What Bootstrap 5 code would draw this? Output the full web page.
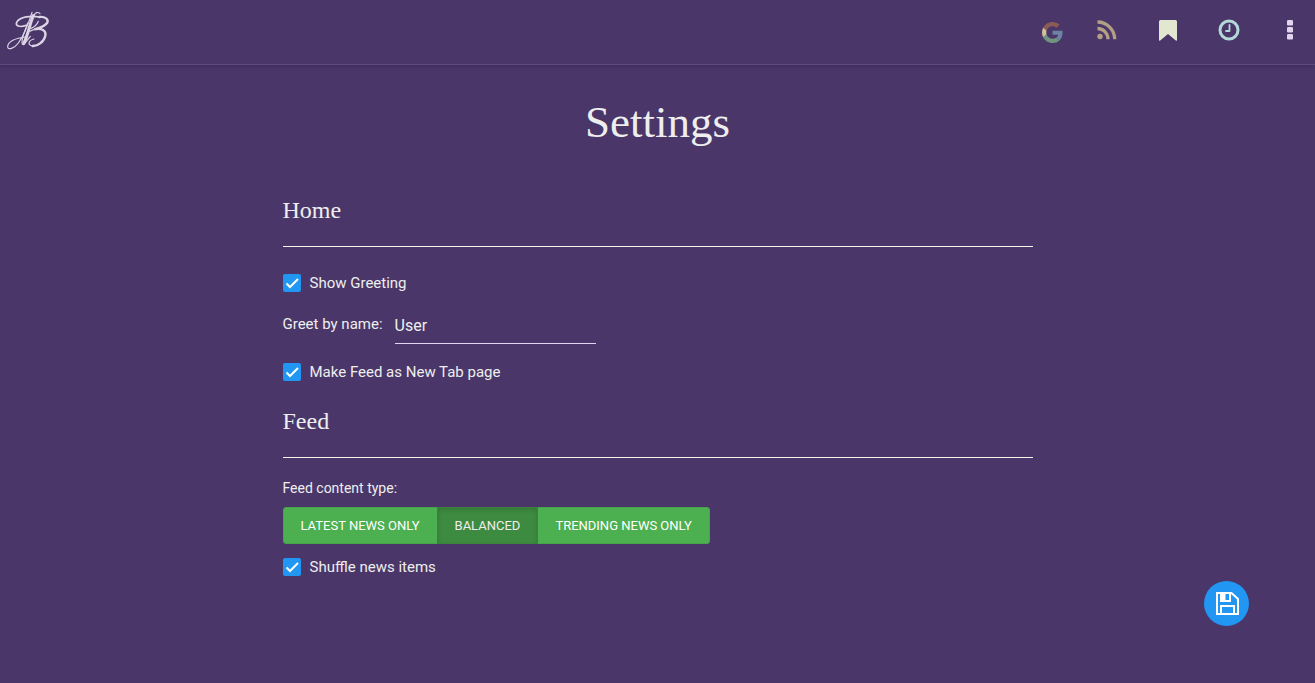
<!DOCTYPE html>
<html lang="en">
<head>
<meta charset="utf-8">
<meta name="viewport" content="width=device-width, initial-scale=1">
<title>Settings</title>
<link href="https://cdn.jsdelivr.net/npm/bootstrap@5.3.0/dist/css/bootstrap.min.css" rel="stylesheet">
<style>
  body { background: #4a3669; color: #eee; font: 15px/24px Roboto, sans-serif; }
  h1, h2 { font-family: "Liberation Serif", serif; font-weight: 400; }
  h1 { font-size: 45px; line-height: 54px; margin: 30px 0 47px; }
  h2 { font-size: 24px; line-height: 28px; margin: 0; }
  .topbar { height: 65px; padding: 0 13px 4px 7px; border-bottom: 1px solid #5d4a82; box-shadow: 0 1px 4px rgba(0,0,0,.2); }
  .topbar svg { display: block; }
  .icon-nav { gap: 37px; }
  .icon-link-box { width: 24px; height: 24px; display: flex; align-items: center; justify-content: center; padding: 0; border: 0; background: none; }
  .google-link { margin: 4px 31px 0 0; }
  .page { max-width: 750px; }
  .rule { margin: 22px 0 24px; border-top: 1px solid #f1f8e9; opacity: 1; }
  .tick { min-height: 24px; margin: 0; padding: 0; gap: 9px; }
  .tick .form-check-input { float: none; width: 18px; height: 18px; margin: 0; border: 0; border-radius: 2px; background-color: #2196f3;
    background-size: 18px 18px;
    background-image: url("data:image/svg+xml,%3Csvg xmlns='http://www.w3.org/2000/svg' viewBox='0 0 18 18'%3E%3Cpath d='M3.5 9.5 7 13l8-8' fill='none' stroke='%23fff' stroke-width='2'/%3E%3C/svg%3E"); }
  .greet { margin: 12px 0 16px; gap: 12px; }
  .greet input { width: 201px; height: 37px; padding: 0; border: 0; border-bottom: 1px solid #e1d5f0; border-radius: 0; background: none; color: #eee; font-size: 16px; }
  .greet input:focus { background: none; color: #fff; box-shadow: none; }
  .feed-group { margin-top: 23px; }
  .feed-label { font-size: 14px; line-height: 20px; margin-bottom: 9px; }
  .feed-type { margin-bottom: 11px; }
  .feed-type .btn { --bs-btn-color: #fff; --bs-btn-bg: #4caf50; --bs-btn-border-color: #47a44b; --bs-btn-hover-color: #fff; --bs-btn-hover-bg: #439a46; --bs-btn-active-bg: #3d8b40; --bs-btn-active-border-color: #39833c;
    height: 37px; padding: 0 17px; border-radius: 3px; font-size: 13px; line-height: 20px; text-transform: uppercase; }
  .feed-type .btn-check:checked + .btn { box-shadow: inset 0 2px 4px rgba(0,0,0,.15); }
  .save { right: 66px; bottom: 57px; width: 45px; height: 45px; background: #2196f3; }
</style>
</head>
<body>
<header class="topbar d-flex align-items-center">
  <a href="#" class="me-auto" aria-label="Home">
    <svg width="44" height="40" viewBox="22 33 132 120" fill="none" stroke="#ddd5e6" stroke-linecap="round">
      <path stroke-width="3.500" d="M97 40C87 72 74 108 56 132C44 149 24 154 24 143C24 127 48 117 78 114"/>
      <path stroke-width="9" d="M101 50C90 75 86 106 72 134"/>
      <path stroke-width="3.500" d="M102 50C107 41 114 37 121 44M84 72C77 95 62 122 68 136M72 136C80 130 85 120 92 112"/>
      <path stroke-width="5" d="M80 79C58 87 47 80 51 70C60 53 95 49 119 54"/>
      <path stroke-width="7" d="M119 54C137 52 147 62 143 71C137 82 119 87 104 91C128 86 140 96 137 110C133 128 115 142 99 141"/>
      <path stroke-width="3.500" d="M104 91C99 92 94 95 91 97M99 141C83 140 85 124 103 120M94 88C105 85 112 77 116 67"/>
    </svg>
  </a>
  <a href="#" class="icon-link-box google-link" aria-label="Google">
    <svg width="21" height="21" viewBox="0 0 48 48">
      <path fill="#8b5c56" d="M24 9.500c3.540 0 6.710 1.220 9.210 3.600l6.850-6.850C35.900 2.380 30.470 0 24 0 14.620 0 6.510 5.380 2.560 13.220l7.980 6.190C12.430 13.720 17.740 9.500 24 9.500z"/>
      <path fill="#6c83a6" d="M46.980 24.550c0-1.570-.15-3.090-.38-4.550H24v9.020h12.940c-.58 2.960-2.260 5.480-4.780 7.180l7.730 6c4.510-4.180 7.090-10.360 7.090-17.650z"/>
      <path fill="#d2c096" d="M10.530 28.590c-.48-1.450-.76-2.990-.76-4.590s.27-3.140.76-4.590l-7.980-6.190C.92 16.460 0 20.120 0 24s.92 7.540 2.560 10.780l7.970-6.190z"/>
      <path fill="#70957c" d="M24 48c6.480 0 11.930-2.130 15.890-5.810l-7.730-6c-2.150 1.450-4.920 2.300-8.160 2.300-6.260 0-11.570-4.220-13.470-9.910l-7.980 6.190C6.510 42.620 14.620 48 24 48z"/>
    </svg>
  </a>
  <nav class="icon-nav d-flex align-items-center" aria-label="Main">
    <a href="#" class="icon-link-box" aria-label="Feed">
      <svg width="20" height="20" viewBox="0 0 20 20" fill="none" stroke="#b39f84" stroke-width="3.300">
        <circle cx="3" cy="16.500" r="2.700" fill="#b39f84" stroke="none"/>
        <path d="M.5 8.500A10.700 10.700 0 0 1 11 19.200M.5 2A17.300 17.300 0 0 1 17.700 19.200"/>
      </svg>
    </a>
    <a href="#" class="icon-link-box" aria-label="Bookmarks">
      <svg width="18" height="21" viewBox="0 0 18 21" fill="#e1e8cf"><path d="M1.500 0h15Q18 0 18 1.500v18.200q0 1.600-1.200.8L9 14 1.200 20.500Q0 21.300 0 19.700V1.500Q0 0 1.500 0z"/></svg>
    </a>
    <a href="#" class="icon-link-box" aria-label="History">
      <svg width="22" height="22" viewBox="0 0 22 22" fill="none" stroke="#b2d8d8">
        <circle cx="11" cy="11" r="9" stroke-width="3"/>
        <path stroke-width="1.800" stroke-linecap="round" stroke-linejoin="round" d="M11.500 6v6H8"/>
      </svg>
    </a>
    <button type="button" class="icon-link-box" aria-label="More">
      <svg width="6" height="20" viewBox="0 0 6 20" fill="#e1d5ee"><rect width="6" height="5.500" rx="1.200"/><rect y="7" width="6" height="5.500" rx="1.200"/><rect y="14" width="6" height="5.500" rx="1.200"/></svg>
    </button>
  </nav>
</header>

<main class="page container-fluid px-0">
  <h1 class="text-center">Settings</h1>
  <form>
    <section>
      <h2>Home</h2>
      <hr class="rule">
      <div class="tick form-check d-flex align-items-center">
        <input class="form-check-input" type="checkbox" id="greeting" checked>
        <label for="greeting">Show Greeting</label>
      </div>
      <div class="greet d-flex align-items-center">
        <label class="pb-1" for="username">Greet by name:</label>
        <input class="form-control" type="text" id="username" value="User">
      </div>
      <div class="tick form-check d-flex align-items-center">
        <input class="form-check-input" type="checkbox" id="newtab" checked>
        <label for="newtab">Make Feed as New Tab page</label>
      </div>
    </section>
    <section class="feed-group">
      <h2>Feed</h2>
      <hr class="rule mb-3">
      <div class="feed-label pt-1" id="feed-type-label">Feed content type:</div>
      <div class="feed-type btn-group d-inline-flex" role="group" aria-labelledby="feed-type-label">
        <input type="radio" class="btn-check" name="feedtype" id="latest">
        <label class="btn d-flex align-items-center" for="latest">Latest news only</label>
        <input type="radio" class="btn-check" name="feedtype" id="balanced" checked>
        <label class="btn d-flex align-items-center" for="balanced">Balanced</label>
        <input type="radio" class="btn-check" name="feedtype" id="trending">
        <label class="btn d-flex align-items-center" for="trending">Trending news only</label>
      </div>
      <div class="tick form-check d-flex align-items-center">
        <input class="form-check-input" type="checkbox" id="shuffle" checked>
        <label for="shuffle">Shuffle news items</label>
      </div>
    </section>
  </form>
</main>

<button type="button" class="save btn rounded-circle border-0 p-0 position-fixed d-flex align-items-center justify-content-center" aria-label="Save">
  <svg width="24" height="24" viewBox="0 0 24 24" fill="none" stroke="#fff" stroke-width="2">
    <path d="M2 1h14.500L23 7v15H2zM6 22v-8h13v8M6 1v8h9V1"/>
    <path fill="#fff" stroke="none" d="M6 1h4.500v8H6z"/>
  </svg>
</button>
<script src="https://cdn.jsdelivr.net/npm/bootstrap@5.3.0/dist/js/bootstrap.bundle.min.js"></script>
</body>
</html>
